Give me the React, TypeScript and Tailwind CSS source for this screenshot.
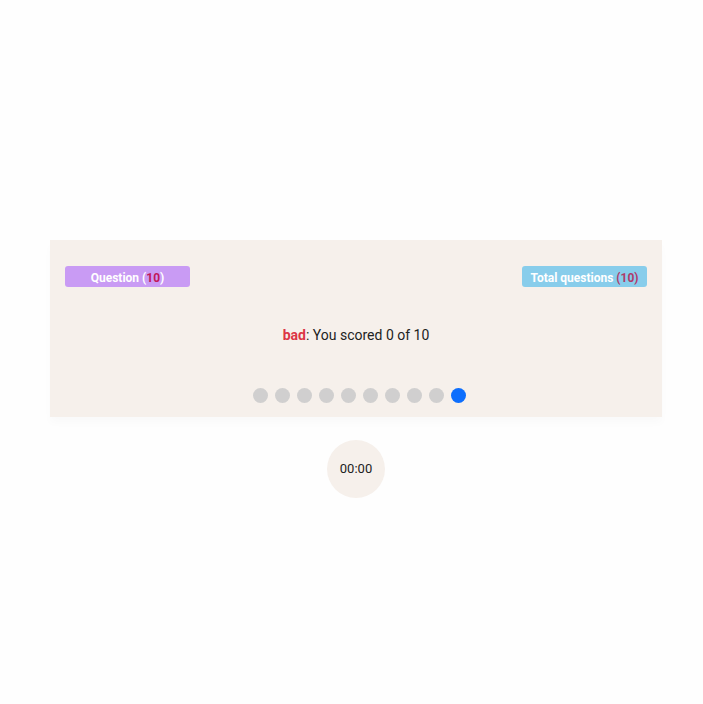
export default function App() {
  const dots = Array.from({ length: 10 }, (_, i) => i);
  return (
    <div
      className="min-h-[704px] w-full bg-[#fefefe] pt-[240px]"
      style={{ fontFamily: "Roboto, 'Liberation Sans', sans-serif" }}
    >
      <div className="ml-[50px] w-[612px]">
        <div className="h-[177px] bg-[#f6f0eb] px-[15px] pt-[26px] shadow-[0_6px_8px_rgba(0,0,0,0.02)]">
          <div className="flex items-center justify-between">
            <div className="flex h-[21px] w-[125px] items-center justify-center rounded-[3px] bg-[#c99bf4] pt-[2px] text-[12px] leading-[14px] font-bold text-white">
              Question (<span className="text-[#c2185b]">10</span>)
            </div>
            <div className="flex h-[21px] w-[125px] items-center justify-center rounded-[3px] bg-[#88cdeb] pt-[2px] text-[12px] leading-[14px] font-bold text-white">
              Total questions&nbsp;<span className="text-[#b03a6a]">(10)</span>
            </div>
          </div>
          <div className="mt-[38px] text-center text-[14px] leading-[20px] text-[#222]">
            <span className="font-bold text-[#dc3545]">bad</span>: You scored 0 of 10
          </div>
          <div className="mt-[43px] flex justify-center gap-[7px] pl-[6px]">
            {dots.map((i) => (
              <span
                key={i}
                className={
                  i === 9
                    ? "h-[15px] w-[15px] rounded-full bg-[#0d6efd]"
                    : "h-[15px] w-[15px] rounded-full bg-[#d0cfcf]"
                }
              />
            ))}
          </div>
        </div>
        <div className="mt-[23px] flex justify-center">
          <div className="flex h-[58px] w-[58px] items-center justify-center rounded-full bg-[#f6f0eb] text-[13px] text-[#222]">
            00:00
          </div>
        </div>
      </div>
    </div>
  );
}
